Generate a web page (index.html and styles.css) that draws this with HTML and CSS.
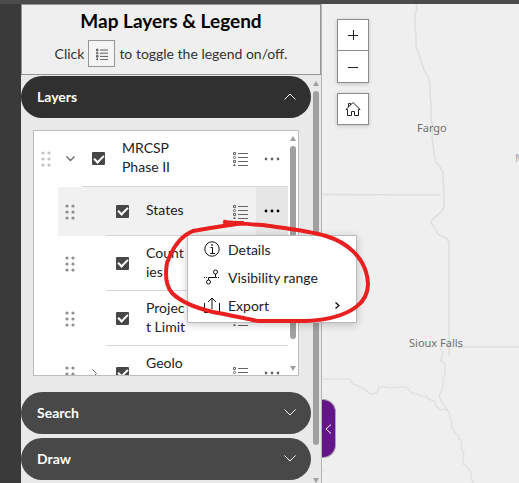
FILE: index.html
```html
<!DOCTYPE html>
<html lang="en">
<head>
<meta charset="utf-8">
<meta name="viewport" content="width=device-width, initial-scale=1">
<title>Map Layers &amp; Legend</title>
<link rel="stylesheet" href="styles.css">
</head>
<body>
<svg class="defs" aria-hidden="true">
  <symbol id="legend" viewBox="0 0 15 15">
    <path d="M5 2.5h10M5 6.5h10M5 10.5h10M5 14.5h10" stroke="currentColor" fill="none"/>
    <path d="M.5 1.500h2v2h-2zM.5 9.500h2v2h-2z" stroke="currentColor" fill="none"/>
    <circle cx="1.500" cy="6.500" r="1.100" stroke="currentColor" fill="none"/>
    <path d="M1.500 12.500L3 15H0z" fill="currentColor"/>
  </symbol>
  <symbol id="grip" viewBox="0 0 10 16">
    <g fill="currentColor"><circle cx="2" cy="2" r="1.600"/><circle cx="8" cy="2" r="1.600"/><circle cx="2" cy="8" r="1.600"/><circle cx="8" cy="8" r="1.600"/><circle cx="2" cy="14" r="1.600"/><circle cx="8" cy="14" r="1.600"/></g>
  </symbol>
  <symbol id="dots" viewBox="0 0 16 4">
    <g fill="currentColor"><circle cx="2" cy="2" r="1.400"/><circle cx="8" cy="2" r="1.400"/><circle cx="14" cy="2" r="1.400"/></g>
  </symbol>
  <symbol id="down" viewBox="0 0 12 7"><path d="M.5.5L6 6L11.500.5" fill="none" stroke="currentColor"/></symbol>
  <symbol id="up" viewBox="0 0 12 7"><path d="M.5 6.500L6 1L11.500 6.500" fill="none" stroke="currentColor"/></symbol>
</svg>
<div class="topbar"></div>
<div class="app">
  <div class="rail"></div>
  <aside class="sidebar">
    <header class="intro">
      <h1>Map Layers &amp; Legend</h1>
      <p>Click <span class="key"><svg class="i-legend-sm"><use href="#legend"/></svg></span> to toggle the legend on/off.</p>
    </header>
    <div class="scroller">
      <div class="accordion">
        <button class="head open" aria-expanded="true">Layers <svg class="i-chev"><use href="#up"/></svg></button>
        <div class="panel">
          <ul class="tree">
            <li class="row">
              <svg class="grip faint"><use href="#grip"/></svg>
              <button class="twist" aria-label="Collapse"><svg class="i-small" viewBox="0 0 9 6"><path d="M.5.5l4 4 4-4" fill="none" stroke="currentColor" stroke-width="1.300"/></svg></button>
              <div class="item">
                <input type="checkbox" id="l1" checked><label for="l1">MRCSP Phase II</label>
                <button class="tool" aria-label="Legend"><svg class="i-legend"><use href="#legend"/></svg></button>
                <button class="tool" aria-label="Options"><svg class="i-dots"><use href="#dots"/></svg></button>
              </div>
            </li>
            <li class="row child active">
              <svg class="grip"><use href="#grip"/></svg>
              <span class="twist"></span>
              <div class="item">
                <input type="checkbox" id="l2" checked><label for="l2">States</label>
                <button class="tool" aria-label="Legend"><svg class="i-legend"><use href="#legend"/></svg></button>
                <button class="tool pressed" aria-label="Options" aria-expanded="true"><svg class="i-dots"><use href="#dots"/></svg></button>
              </div>
            </li>
            <li class="row child">
              <svg class="grip"><use href="#grip"/></svg>
              <span class="twist"></span>
              <div class="item">
                <input type="checkbox" id="l3" checked><label for="l3">Count<wbr>ies</label>
                <button class="tool" aria-label="Legend"><svg class="i-legend"><use href="#legend"/></svg></button>
                <button class="tool" aria-label="Options"><svg class="i-dots"><use href="#dots"/></svg></button>
              </div>
            </li>
            <li class="row child">
              <svg class="grip"><use href="#grip"/></svg>
              <span class="twist"></span>
              <div class="item">
                <input type="checkbox" id="l4" checked><label for="l4">Projec<wbr>t&nbsp;Limit</label>
                <button class="tool" aria-label="Legend"><svg class="i-legend"><use href="#legend"/></svg></button>
                <button class="tool" aria-label="Options"><svg class="i-dots"><use href="#dots"/></svg></button>
              </div>
            </li>
            <li class="row child">
              <svg class="grip"><use href="#grip"/></svg>
              <button class="twist" aria-label="Expand"><svg class="i-right" viewBox="0 0 5 9"><path d="M.5.5L4.500 4.500L.5 8.500" fill="none" stroke="currentColor"/></svg></button>
              <div class="item">
                <input type="checkbox" id="l5" checked><label for="l5" class="two">Geolo</label>
                <button class="tool" aria-label="Legend"><svg class="i-legend"><use href="#legend"/></svg></button>
                <button class="tool" aria-label="Options"><svg class="i-dots"><use href="#dots"/></svg></button>
              </div>
            </li>
          </ul>
          <div class="bar inner"><i class="arrow"></i><i class="thumb"></i><i class="arrow end"></i></div>
        </div>
        <button class="head" aria-expanded="false">Search <svg class="i-chev"><use href="#down"/></svg></button>
        <button class="head" aria-expanded="false">Draw <svg class="i-chev"><use href="#down"/></svg></button>
      </div>
      <div class="bar outer"><i class="arrow"></i><i class="thumb"></i><i class="arrow end"></i></div>
    </div>
  </aside>
  <main class="map">
    <svg class="base" viewBox="322 4 800 800" fill="none" stroke="#dedede" aria-hidden="true">
      <path stroke-width="1.500" d="M416 4l1 5-2 5v12l1 8v13l3 7 2 7 3 9 4 6 2 8v10l1 8v18l2 8-1 8 1 9 1 8 2 9 4 5 3 6v8l1 9v17l-3 5-9 8-1 3 3 4 4 7 8 4 2 2 1 5v111"/>
      <path stroke-width="1.500" d="M322 194.500l119 .5M458 347h700"/>
      <path stroke-width="1.200" d="M440 348l3 5-1 4-2 3 4 3 1 2v9l-2 5v8l-4 9 2 5 4 5 3 5-3-2-4 1-5-4-1-5-5-1-4-4h-6l-2-2-6-1-3-3-3-3h-7l-8 1-6-1h-6l-2 6-6 1-9-6-9-4-3-5h-31"/>
      <path stroke-width="1.200" d="M446 409l3 2 1 7 2 3-1 4 4 8 3 2 1 4 3 2-1 8 3 2-1 8v5l4 3 4 5v7l5 9"/>
      <path d="M322 468l2 3"/>
    </svg>
    <span class="city fargo">Fargo</span>
    <span class="city sioux">Sioux Falls</span>
    <span class="city mn">M</span>
    <div class="controls">
      <div class="zoom">
        <button aria-label="Zoom in"><svg viewBox="0 0 10 10"><path d="M0 5.500h10M5.500 0v10" stroke="currentColor"/></svg></button>
        <button aria-label="Zoom out"><svg viewBox="0 0 10 10"><path d="M0 5.500h10" stroke="currentColor"/></svg></button>
      </div>
      <button class="home" aria-label="Home"><svg viewBox="0 0 16 16"><path d="M1 8.500L8 1.500L15 8.500H13.500V14.500H9.500V10.500H6.500V14.500H2.500V8.500ZM3.500 6V2.500h2V4" fill="none" stroke="currentColor"/></svg></button>
    </div>
    <button class="collapse" aria-label="Collapse panel"><svg viewBox="0 0 7 10"><path d="M6 .5L1 5l5 4.500" fill="none" stroke="currentColor"/></svg></button>
  </main>
</div>
<div class="menu" role="menu">
  <button role="menuitem"><svg viewBox="0 0 16 16" fill="none" stroke="currentColor"><circle cx="8" cy="8" r="7.200"/><path d="M6.500 6.500h2V12M6 12.500h5"/><circle cx="8" cy="4" r=".5"/></svg>Details</button>
  <button role="menuitem"><svg viewBox="0 0 16 16" fill="none" stroke="currentColor"><path d="M0 8.500h4M12 8.500h4" stroke-dasharray="1 1"/><path d="M4.500 11V8.500h7V5"/><circle cx="4.500" cy="13" r="2"/><circle cx="11.500" cy="3" r="2"/></svg>Visibility range</button>
  <button role="menuitem"><svg viewBox="0 0 16 16" fill="none" stroke="currentColor"><path d="M.5 6v9.500h15V6M8 12V1M4 5l4-4 4 4"/></svg>Export<svg class="sub" viewBox="0 0 5 7" fill="none" stroke="currentColor"><path d="M.5.5L4 3.500L.5 6.500" stroke-width="1.300"/></svg></button>
</div>
<svg class="ink" viewBox="160 215 220 115" fill="none" stroke="#ea1f1f" stroke-width="4" stroke-linecap="square" aria-hidden="true">
  <path d="M225 222c6 2 12 1 19 1-16 2-34 5-51 8-13 5-21 18-26 32-2 12-1 23 5 30 9 9 24 15 41 19 17 3 29 6 45 9h48c22-1 38-5 50-14 12-9 14-22 10-35-4-14-17-29-40-36-20-6-43-8-64-11-12 0-22-3-34-2"/>
</svg>
</body>
</html>
```

FILE: styles.css
```css
* { box-sizing: border-box; }
body {
  margin: 0;
  height: 100vh;
  display: flex;
  flex-direction: column;
  overflow: hidden;
  position: relative;
  font: 14px/19px Lato, "Open Sans", sans-serif;
  color: #222;
}
svg { display: block; flex: none; }
button {
  font: inherit;
  color: inherit;
  border: 0;
  padding: 0;
  margin: 0;
  background: none;
}
.defs { position: absolute; width: 0; height: 0; }
.topbar { flex: none; height: 4px; background: #4b4b4b; }
.app { flex: 1; min-height: 0; display: flex; }
.rail { flex: none; width: 21px; background: #3a3a3a; }
.sidebar {
  flex: none;
  width: 301px;
  display: flex;
  flex-direction: column;
  background: #e9e9e9;
  border-right: 1px solid #b4b4b4;
}
.intro {
  flex: none;
  border: 1px solid #959595;
  background: #efefef;
  padding: 4px 0 7px;
  margin-bottom: 1px;
  text-align: center;
}
h1 { margin: 0 0 7px; font-size: 19px; line-height: 24px; font-weight: 700; color: #000; }
.intro p {
  margin: 0;
  display: flex;
  justify-content: center;
  align-items: center;
  gap: 4px;
  font-size: 14px;
  color: #333;
}
.key {
  width: 27px;
  height: 27px;
  border: 1px solid #959595;
  background: #f5f5f5;
  display: grid;
  place-items: center;
}
.i-legend-sm { width: 12px; height: 12px; color: #333; }
.scroller { flex: 1; min-height: 0; display: flex; overflow: hidden; }
.accordion { flex: 1; min-width: 0; }
.head {
  width: 100%;
  height: 42px;
  margin-bottom: 4px;
  padding: 0 15px 2px 16px;
  border-radius: 21px;
  background: #484848;
  color: #fff;
  font-weight: 700;
  display: flex;
  align-items: center;
  justify-content: space-between;
}
.head.open { background: #303030; margin-bottom: 12px; }
.i-chev { width: 12px; height: 7px; }
.panel {
  height: 246px;
  margin: 0 12px 16px;
  border: 1px solid #bdbdbd;
  background: #fff;
  display: flex;
  overflow: hidden;
}
.tree { flex: 1; min-width: 0; list-style: none; margin: 0; padding: 0; }
.row { display: flex; align-items: stretch; height: 55px; }
.row.child { margin-left: 24px; }
.row.active { height: 49px; background: #f1f1f1; }
.row:first-child { height: 56px; }
.grip { width: 10px; height: 16px; margin: 0 7px; align-self: center; color: #8f8f8f; }
.grip.faint { color: #c2c2c2; }
.twist { width: 24px; flex: none; display: grid; place-items: center; color: #666; }
.i-small { width: 9px; height: 6px; }
.i-right { width: 5px; height: 9px; }
.item { flex: 1; min-width: 0; display: flex; align-items: center; border-bottom: 1px solid #d6d6d6; padding-left: 10px; }
input {
  appearance: none;
  flex: none;
  width: 13px;
  height: 13px;
  margin: 0 17px 0 0;
  border-radius: 1px;
  background: #474747;
  display: grid;
  place-items: center;
}
input::before {
  content: "";
  width: 4px;
  height: 8px;
  border: solid #fff;
  border-width: 0 2px 2px 0;
  transform: translateY(-1px) rotate(45deg);
}
label { flex: 1; min-width: 0; padding: 0 36px 3px 0; }
label.two { min-height: 41px; }
.tool { flex: none; width: 32px; align-self: stretch; display: grid; place-items: center; color: #666; }
.tool.pressed { background: #e6e6e6; color: #000; }
.i-legend { width: 15px; height: 15px; }
.i-dots { width: 16px; height: 4px; }
.bar { flex: none; display: flex; flex-direction: column; align-items: center; }
.inner { width: 10px; padding: 5px 0 4px; }
.outer { width: 10px; padding: 5px 0 0; }
.arrow { border: 3px solid transparent; border-bottom: 5px solid #a0a0a0; border-top: 0; flex: none; }
.arrow.end { border-top: 5px solid #a0a0a0; border-bottom: 0; margin-top: auto; }
.thumb { width: 6px; border-radius: 3px; background: #a0a0a0; margin-top: 5px; }
.inner .thumb { height: 82%; }
.outer .thumb { height: 88%; }
.map { flex: 1; min-width: 0; position: relative; overflow: hidden; background: #efefef; }
.base { position: absolute; left: 0; top: 0; width: 800px; height: 800px; }
.city { position: absolute; font: 11px/14px "Noto Sans", sans-serif; color: #6f6f6f; white-space: nowrap; }
.fargo { left: 95px; top: 117px; }
.sioux { left: 87px; top: 332px; }
.mn { left: 193px; top: 147px; color: #aaa; }
.controls { position: absolute; left: 15px; top: 15px; display: grid; gap: 10px; }
.controls button {
  width: 32px;
  height: 32px;
  border: 1px solid #8c8c8c;
  background: #fff;
  color: #222;
  display: grid;
  place-items: center;
}
.zoom, .home { box-shadow: 0 1px 4px #0003; }
.zoom button + button { border-top: 0; }
.zoom svg { width: 10px; height: 10px; }
.home svg { width: 16px; height: 16px; }
.collapse {
  position: absolute;
  left: 0;
  top: 395px;
  width: 14px;
  height: 59px;
  border: 1px solid #a9a9a9;
  border-left: 0;
  border-radius: 0 13px 13px 0;
  background: #64158a;
  color: #fff;
  display: grid;
  place-items: center;
}
.collapse svg { width: 7px; height: 10px; }
.menu {
  position: absolute;
  left: 187px;
  top: 235px;
  width: 170px;
  padding: 0 16px 2px;
  background: #fff;
  border: 1px solid #bbb;
  box-shadow: 0 2px 8px #0003;
}
.menu button { width: 100%; height: 27px; padding-bottom: 1px; margin-bottom: 1px; display: flex; align-items: center; gap: 8px; color: #222; }
.menu svg { width: 16px; height: 16px; color: #111; }
.menu .sub { width: 5px; height: 7px; margin-left: auto; }
.ink { position: absolute; left: 160px; top: 215px; width: 220px; height: 115px; pointer-events: none; }
```
